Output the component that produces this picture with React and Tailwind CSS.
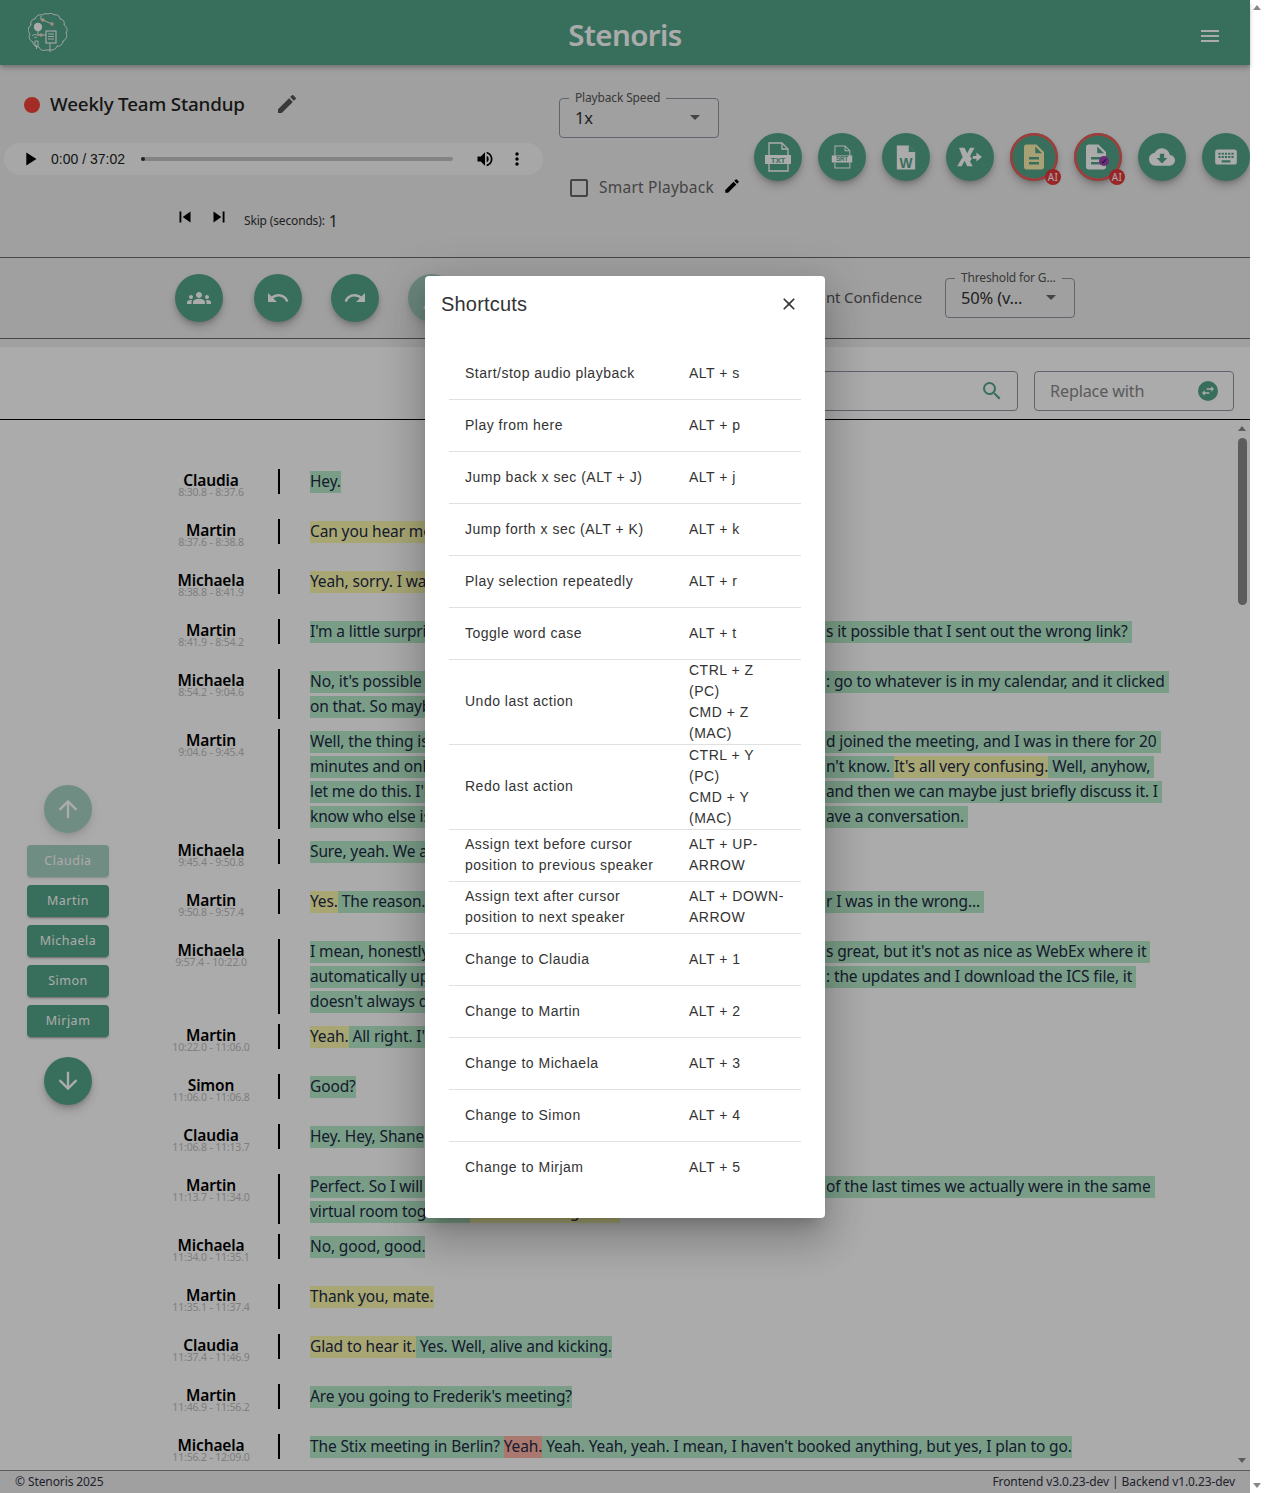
import {
  MdEdit,
  MdPlayArrow,
  MdVolumeUp,
  MdMoreVert,
  MdSkipPrevious,
  MdSkipNext,
  MdGroups,
  MdUndo,
  MdRedo,
  MdSearch,
  MdClose,
  MdMenu,
  MdCloudDownload,
  MdKeyboard,
  MdArrowUpward,
  MdArrowDownward,
  MdArrowDropDown,
  MdCheckBoxOutlineBlank,
  MdDescription,
  MdSwapHoriz,
} from "react-icons/md";

const nunito = "font-['Noto_Sans',sans-serif] tracking-[-0.01em]";

const speakers = ["Claudia", "Martin", "Michaela", "Simon", "Mirjam"];

const shortcuts = [
  ["Start/stop audio playback", "ALT + s"],
  ["Play from here", "ALT + p"],
  ["Jump back x sec (ALT + J)", "ALT + j"],
  ["Jump forth x sec (ALT + K)", "ALT + k"],
  ["Play selection repeatedly", "ALT + r"],
  ["Toggle word case", "ALT + t"],
  ["Undo last action", "CTRL + Z (PC)\nCMD + Z (MAC)"],
  ["Redo last action", "CTRL + Y (PC)\nCMD + Y (MAC)"],
  ["Assign text before cursor position to previous speaker", "ALT + UP-ARROW"],
  ["Assign text after cursor position to next speaker", "ALT + DOWN-ARROW"],
  ["Change to Claudia", "ALT + 1"],
  ["Change to Martin", "ALT + 2"],
  ["Change to Michaela", "ALT + 3"],
  ["Change to Simon", "ALT + 4"],
  ["Change to Mirjam", "ALT + 5"],
];

// each line: parts left of the dialog, then optionally the parts right of it
// g = confident, y = unsure, r = very unsure
const rows = [
  ["Claudia", "8:30.8 - 8:37.6", [[[["g", "Hey."]]]]],
  ["Martin", "8:37.6 - 8:38.8", [[[["y", "Can you hear me"]]]]],
  ["Michaela", "8:38.8 - 8:41.9", [[[["y", "Yeah, sorry. I was"]]]]],
  ["Martin", "8:41.9 - 8:54.2", [[[["g", "I'm a little surprised"]], [["g", "s it possible that I sent out the wrong link?"]]]]],
  [
    "Michaela",
    "8:54.2 - 9:04.6",
    [
      [[["g", "No, it's possible"]], [["g", ": go to whatever is in my calendar, and it clicked"]]],
      [[["g", "on that. So maybe"]]],
    ],
  ],
  [
    "Martin",
    "9:04.6 - 9:45.4",
    [
      [[["g", "Well, the thing is"]], [["g", "d joined the meeting, and I was in there for 20"]]],
      [[["g", "minutes and only"]], [["g", "n't know. "], ["y", "It's all very confusing."], ["g", " Well, anyhow,"]]],
      [[["g", "let me do this. I'll"]], [["g", "and then we can maybe just briefly discuss it. I"]]],
      [[["g", "know who else is"]], [["g", "ave a conversation."]]],
    ],
  ],
  ["Michaela", "9:45.4 - 9:50.8", [[[["g", "Sure, yeah. We are"]]]]],
  ["Martin", "9:50.8 - 9:57.4", [[[["y", "Yes."], ["g", " The reason."]], [["g", "r I was in the wrong..."]]]]],
  [
    "Michaela",
    "9:57.4 - 10:22.0",
    [
      [[["g", "I mean, honestly"]], [["g", "s great, but it's not as nice as WebEx where it"]]],
      [[["g", "automatically updates"]], [["g", ": the updates and I download the ICS file, it"]]],
      [[["g", "doesn't always do"]]],
    ],
  ],
  ["Martin", "10:22.0 - 11:06.0", [[[["y", "Yeah."], ["g", " All right. I'll"]]]]],
  ["Simon", "11:06.0 - 11:06.8", [[[["g", "Good?"]]]]],
  ["Claudia", "11:06.8 - 11:13.7", [[[["g", "Hey. Hey, Shane"]]]]],
  [
    "Martin",
    "11:13.7 - 11:34.0",
    [
      [[["g", "Perfect. So I will"]], [["g", "of the last times we actually were in the same"]]],
      [[["g", "virtual room together. "], ["y", "It's been a long time."]]],
    ],
  ],
  ["Michaela", "11:34.0 - 11:35.1", [[[["g", "No, good, good."]]]]],
  ["Martin", "11:35.1 - 11:37.4", [[[["y", "Thank you, mate."]]]]],
  ["Claudia", "11:37.4 - 11:46.9", [[[["y", "Glad to hear it."], ["g", " Yes. Well, alive and kicking."]]]]],
  ["Martin", "11:46.9 - 11:56.2", [[[["g", "Are you going to Frederik's meeting?"]]]]],
  [
    "Michaela",
    "11:56.2 - 12:09.0",
    [[[["g", "The Stix meeting in Berlin? "], ["r", "Yeah."], ["g", " Yeah. Yeah, yeah. I mean, I haven't booked anything, but yes, I plan to go."]]]],
  ],
];

const hl = { g: "bg-[#b6eac9]", y: "bg-[#fbf9ae]", r: "bg-[#ffb3a6]" };

function Marked({ parts }) {
  return (
    <>
      {parts.map(([c, t], i) => (
        <span key={i} className={hl[c] + " block shrink-0 h-[22px] leading-[20px] whitespace-pre"}>
          {t}
        </span>
      ))}
    </>
  );
}

function Row({ name, time, lines }) {
  return (
    <div className="flex items-start min-h-[40px] mb-[10px]">
      <div className="w-[130px] ml-[146px] flex flex-col items-center">
        <div className="mt-[4px] h-[15px] text-[15.5px] leading-[14px] font-semibold text-black">{name}</div>
        <div className="text-[10.5px] leading-[9px] text-[#bdbdbd]">{time}</div>
      </div>
      <div className="flex items-stretch">
        <div className="w-[2px] bg-black ml-[2px] mr-[30px]" />
        <div className="text-[15.5px] tracking-[-0.008em] text-[#1e2b45]">
          {lines.map(([left, right], i) => (
            <div key={i} className="flex h-[25px] items-center whitespace-nowrap">
              {right ? (
                <>
                  <div className="flex w-[515px] h-[22px] overflow-hidden bg-[#b6eac9]">
                    <Marked parts={left} />
                  </div>
                  <div className="flex bg-[#b6eac9] pl-[1px] pr-[4px]">
                    <Marked parts={right} />
                  </div>
                </>
              ) : (
                <Marked parts={left} />
              )}
            </div>
          ))}
        </div>
      </div>
    </div>
  );
}

function RoundBtn({ children, className = "" }) {
  return (
    <div className={"w-12 h-12 rounded-full bg-[#54a689] text-white flex items-center justify-center shadow-[0_3px_5px_-1px_rgba(0,0,0,0.2),0_6px_10px_0_rgba(0,0,0,0.14)] shrink-0 relative " + className}>
      {children}
    </div>
  );
}

function Ai() {
  return (
    <span className="absolute -right-[3px] -bottom-[4px] w-4 h-4 rounded-full bg-[#e5383b] text-white text-[10px] leading-4 text-center tracking-[0.03em]">
      AI
    </span>
  );
}

function FileOutline({ label, small }) {
  return (
    <svg viewBox="0 0 28 32" className={small ? "w-[22px] h-[26px]" : "w-[28px] h-[32px]"} fill="none" stroke="currentColor" strokeWidth="1.3">
      <path d="M5 14V2h13l6 6v22H5v-7" />
      <path d="M18 2v6h6" />
      <rect x="1" y="14" width="26" height="9" fill="currentColor" stroke="none" />
      <text x="14" y="21.5" textAnchor="middle" fontSize="8" fontWeight="700" fill="#54a689" stroke="none" fontFamily="Liberation Sans, sans-serif">
        {label}
      </text>
    </svg>
  );
}

function Outlined({ label, value, className }) {
  return (
    <div className={"h-10 border border-[#8f96a3] rounded flex items-center pl-[15px] " + className}>
      <span className="absolute -top-[7px] left-[10px] bg-[#efefef] px-[6px] text-[12px] leading-[14px] text-[#555] whitespace-nowrap">{label}</span>
      <span className="text-[16.5px] text-[#333]">{value}</span>
      <MdArrowDropDown className="absolute right-[12px] top-[7px] text-[#666]" size={24} />
    </div>
  );
}

function Logo() {
  return (
    <svg viewBox="0 0 40 40" className="w-10 h-10 ml-[28px] text-[#fff]" fill="none" stroke="currentColor" strokeWidth="0.9">
      <path d="M20 1c2-1 5-1 6 1 3-1 6 1 6 4 3 0 5 3 4 6 3 2 4 5 2 8 2 3 0 7-3 8 0 3-3 6-6 5-1 3-3 4-6 4h-5c-3 1-6 0-7-3-3 0-6-2-6-5-3-1-5-5-3-8-3-3-2-7 1-9-1-3 1-6 4-6 1-3 4-5 7-4 2-1 4-2 6-1z" />
      <circle cx="10" cy="14" r="4.2" fill="currentColor" stroke="none" />
      <path d="M13 3v4h2M15 7l9 4M10 18v4h3M13 22h5M22 30v9" />
      <circle cx="15" cy="7" r="1.7" fill="#ffd0b8" stroke="none" />
      <circle cx="24" cy="11" r="1.7" fill="#ffd0b8" stroke="none" />
      <circle cx="13" cy="22" r="1.7" fill="#ffd0b8" stroke="none" />
      <rect x="18" y="18" width="10" height="12" strokeWidth="1.1" />
      <path d="M20 21h6M20 23.5h6M20 26h6" />
      <path d="M4 23c2-2 4-2 6 0M6 25c1-1 2-1 3 0M7 28h3v5H7zM8.500 33v3" />
    </svg>
  );
}

export default function App() {
  return (
    <div className={"relative flex h-[1493px] w-[1265px] overflow-hidden bg-white " + nunito}>
      <div className="w-[1250px] h-full flex flex-col relative">
        <header className="h-[65px] bg-[#54a689] flex items-center justify-between shrink-0 shadow-[0_2px_4px_-1px_rgba(0,0,0,0.2),0_4px_5px_0_rgba(0,0,0,0.14)] relative z-10">
          <Logo />
          <div className="absolute left-0 right-0 top-[12px] text-center text-[29.5px] leading-[46px] font-semibold tracking-[-0.02em] text-white">Stenoris</div>
          <MdMenu className="mr-[28px] mt-[7px] text-white" size={24} />
        </header>

        <section className="h-[192px] bg-[#efefef] shrink-0 relative flex">
          <div className="w-[554px] shrink-0">
            <div className="flex items-center h-[24px] mt-[27px] ml-[24px]">
              <span className="w-4 h-4 rounded-full bg-[#f44336] mt-[2px]" />
              <span className="ml-[10px] text-[18.8px] font-medium text-[#222]">Weekly Team Standup</span>
              <MdEdit className="ml-[30px] text-[#555]" size={24} />
            </div>
            <div className="mt-[27px] ml-[4px] w-[539px] h-[32px] rounded-full bg-[#f9fafb] flex items-center text-black font-['Liberation_Sans',sans-serif] tracking-normal">
              <MdPlayArrow className="ml-[15px]" size={22} />
              <span className="ml-[10px] text-[14px] text-[#222]">0:00 / 37:02</span>
              <div className="ml-[16px] w-[312px] h-1 rounded bg-[#c4c4c4] relative">
                <span className="absolute left-0 top-0 w-1 h-1 rounded-full bg-[#333]" />
              </div>
              <MdVolumeUp className="ml-[22px]" size={20} />
              <MdMoreVert className="ml-[12px]" size={20} />
            </div>
            <div className="flex items-center mt-[32px] ml-[174px] h-[24px] text-black">
              <MdSkipPrevious size={22} className="mt-[-4px]" />
              <MdSkipNext className="ml-[12px] mt-[-4px]" size={22} />
              <span className="ml-[14px] mt-[3px] text-[12px] text-[#333]">Skip (seconds):</span>
              <span className="ml-[4px] mt-[3px] text-[16px] text-[#333]">1</span>
            </div>
          </div>
          <div className="w-[200px] shrink-0 ml-[5px]">
            <div className="relative w-[160px] mt-[33px]">
              <Outlined label="Playback Speed" value="1x" className="w-full" />
            </div>
            <div className="flex items-center mt-[38px] ml-[8px]">
              <MdCheckBoxOutlineBlank className="text-[#666]" size={24} />
              <span className="ml-[8px] text-[15.5px] text-[#666] tracking-[0.015em]">Smart Playback</span>
              <MdEdit className="ml-[9px] mt-[-4px] text-black" size={18} />
            </div>
          </div>
          <div className="absolute left-[754px] top-[68px] flex gap-4">
            <RoundBtn><FileOutline label="TXT" /></RoundBtn>
            <RoundBtn><FileOutline label="SRT" small /></RoundBtn>
            <RoundBtn>
              <svg viewBox="0 0 24 28" className="w-[22px] h-[27px]">
                <path d="M2 1h13l7 7v19H2z" fill="currentColor" />
                <path d="M15 1v7h7" fill="#54a689" />
                <text x="12" y="25" textAnchor="middle" fontSize="15" fontWeight="700" fill="#54a689" fontFamily="Liberation Sans, sans-serif">W</text>
              </svg>
            </RoundBtn>
            <RoundBtn>
              <svg viewBox="0 0 28 24" className="w-[26px] h-[22px]" fill="currentColor">
                <path d="M2 2h6l3 6 3-6h5l-5 9 2 3-2 3 3 5h-6l-3-6-3 6H0l6-10z" />
                <path d="M17 11h4V7l6 5-6 5v-3h-4z" />
              </svg>
            </RoundBtn>
            <RoundBtn className="ring-[2.5px] ring-[#f25a5a] ring-inset shadow-[0_0_6px_#e5383b]">
              <MdDescription className="text-[#fdf0b0]" size={30} />
              <Ai />
            </RoundBtn>
            <RoundBtn className="ring-[2.5px] ring-[#f25a5a] ring-inset shadow-[0_0_6px_#e5383b]">
              <MdDescription className="mr-[4px]" size={30} />
              <span className="absolute left-[25px] top-[23px] w-[10px] h-[10px] rounded-full bg-[#a040b8] text-black text-[8px] leading-[10px] text-center">✓</span>
              <Ai />
            </RoundBtn>
            <RoundBtn><MdCloudDownload size={26} /></RoundBtn>
            <RoundBtn><MdKeyboard size={26} /></RoundBtn>
          </div>
        </section>

        <section className="h-[81px] bg-[#efefef] border-t border-[#6a6a6a] shrink-0 relative flex items-center pl-[175px]">
          <RoundBtn><MdGroups size={24} /></RoundBtn>
          <RoundBtn className="ml-[31px]"><MdUndo size={24} /></RoundBtn>
          <RoundBtn className="ml-[29px]"><MdRedo size={24} /></RoundBtn>
          <RoundBtn className="ml-[29px] opacity-50 text-[28px]">A</RoundBtn>
          <span className="absolute left-[826px] top-[28px] text-[15px] text-[#555]">nt Confidence</span>
          <div className="absolute left-[945px] top-[20px] w-[130px]">
            <Outlined label="Threshold for G..." value="50% (v..." className="w-full" />
          </div>
        </section>

        <div className="h-[9px] bg-[#efefef] border-t border-[#6a6a6a] shrink-0" />

        <section className="h-[73px] bg-white border-b border-black shrink-0 relative">
          <div className="absolute left-[700px] w-[318px] top-[24px] h-10 border border-[#8f96a3] rounded flex items-center justify-end pr-[13px]">
            <MdSearch className="text-[#54a689]" size={24} />
          </div>
          <div className="absolute left-[1034px] w-[200px] top-[24px] h-10 border border-[#8f96a3] rounded flex items-center justify-between pl-[15px] pr-[15px]">
            <span className="text-[16.2px] text-[#888]">Replace with</span>
            <span className="w-5 h-5 rounded-full bg-[#54a689] text-white flex items-center justify-center">
              <MdSwapHoriz size={16} />
            </span>
          </div>
        </section>

        <main className="flex-1 relative overflow-hidden pt-[49px] bg-white">
          {rows.map((r, i) => (
            <Row key={i} name={r[0]} time={r[1]} lines={r[2]} />
          ))}
          <div className="absolute left-[1235px] top-0 bottom-0 w-[15px] bg-white">
            <span className="absolute left-[3px] top-[6px] border-x-[4.5px] border-x-transparent border-b-[5px] border-b-[#8a8a8a]" />
            <span className="absolute left-[3px] top-[18px] w-[9px] h-[167px] rounded-full bg-[#8a8a8a]" />
            <span className="absolute left-[3px] bottom-[7px] border-x-[4.5px] border-x-transparent border-t-[5px] border-t-[#8a8a8a]" />
          </div>
          <div className="absolute left-[27px] top-[365px] w-[82px] flex flex-col items-center">
            <RoundBtn className="opacity-50"><MdArrowUpward size={28} /></RoundBtn>
            <div className="mt-[12px] w-full flex flex-col gap-2">
              {speakers.map((s, i) => (
                <div key={s} className={"h-8 rounded bg-[#54a689] text-white text-[12.5px] leading-8 text-center tracking-[0.04em] shadow-[0_3px_1px_-2px_rgba(0,0,0,0.2),0_2px_2px_0_rgba(0,0,0,0.14)] " + (i === 0 ? "opacity-50" : "")}>
                  {s}
                </div>
              ))}
            </div>
            <RoundBtn className="mt-[20px]"><MdArrowDownward size={28} /></RoundBtn>
          </div>
        </main>

        <footer className="h-[23px] bg-[#efefef] border-t border-[#888] shrink-0 flex items-center justify-between pl-[15px] pr-[15px] text-[12px] tracking-[-0.008em] text-[#334]">
          <span>© Stenoris 2025</span>
          <span>Frontend v3.0.23-dev | Backend v1.0.23-dev</span>
        </footer>
      </div>

      <div className="w-[15px] h-full bg-white relative">
        <span className="absolute left-[3px] top-[5px] border-x-[4.5px] border-x-transparent border-b-[5px] border-b-[#888]" />
        <span className="absolute left-[3px] bottom-[5px] border-x-[4.5px] border-x-transparent border-t-[5px] border-t-[#888]" />
      </div>

      {/* dialog */}
      <div className="absolute left-0 top-0 w-[1250px] h-full bg-black/33 z-20" />
      <div className="absolute left-[425px] top-[276px] w-[400px] h-[942px] bg-white rounded z-30 shadow-[0_11px_15px_-7px_rgba(0,0,0,0.2),0_24px_38px_3px_rgba(0,0,0,0.14),0_9px_46px_8px_rgba(0,0,0,0.12)] font-['Liberation_Sans',sans-serif] tracking-normal text-[#333]">
        <div className="h-[56px] flex items-center pl-4 text-[20px] tracking-[0.2px]">Shortcuts</div>
        <MdClose className="absolute right-[26px] top-[18px] text-[#333]" size={20} />
        <table className="ml-6 mt-[16px] w-[352px] text-[14px] leading-[21px] tracking-[0.5px] border-collapse table-fixed">
          <tbody>
            {shortcuts.map(([a, b], i) => (
              <tr key={i} className={i < shortcuts.length - 1 ? "border-b border-[#e0e0e0]" : ""}>
                <td className={"pl-4 pr-4 w-[240px] " + (i === 0 ? "h-[51px]" : "h-[52px]")}>{a}</td>
                <td className="pr-4 whitespace-pre-line">{b}</td>
              </tr>
            ))}
          </tbody>
        </table>
      </div>
    </div>
  );
}
